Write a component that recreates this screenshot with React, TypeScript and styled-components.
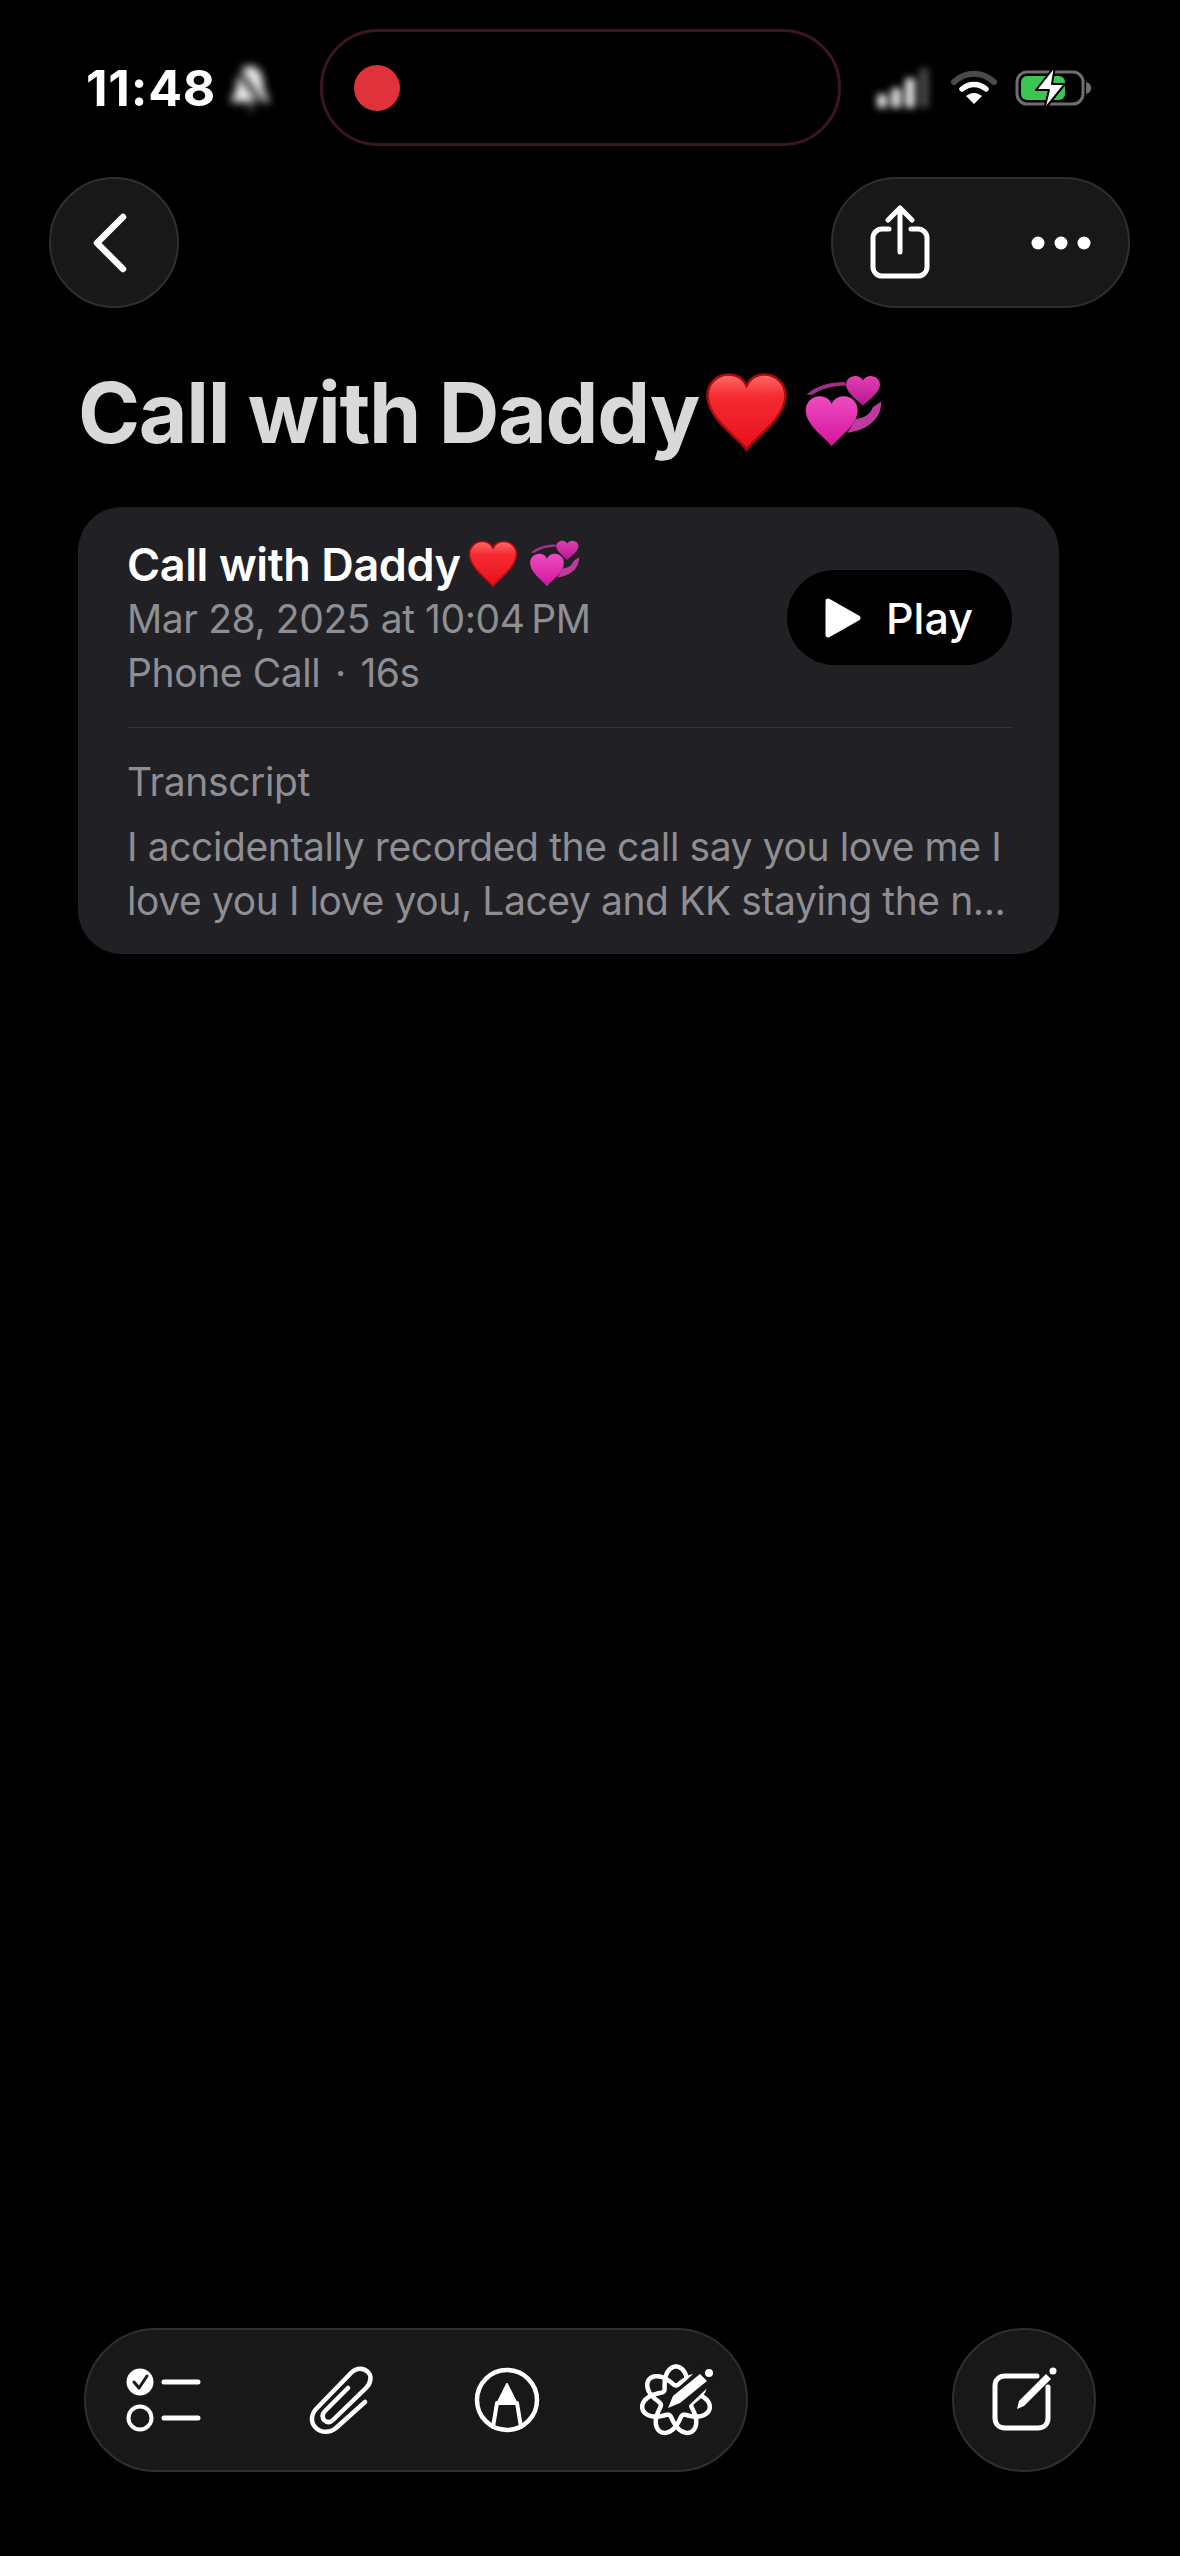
import { createGlobalStyle, styled } from 'styled-components'

const GlobalStyle = createGlobalStyle`
  html, body {
    margin: 0;
    background: #000;
  }
  * {
    box-sizing: border-box;
  }
`

const Page = styled.div`
  width: 1180px;
  height: 2556px;
  background: #000;
  color: #fff;
  font-family: Inter, "Liberation Sans", sans-serif;
  display: flex;
  flex-direction: column;
  overflow: hidden;
`

const StatusBar = styled.div`
  height: 117px;
  margin-top: 29px;
  padding: 0 50px 0 86px;
  display: flex;
  align-items: center;
`

const Clock = styled.div`
  width: 139px;
  font-size: 50px;
  font-weight: 700;
  letter-spacing: 0.8px;
`

const Muted = styled.svg`
  width: 50px;
  height: 52px;
  filter: blur(4.5px);
`

const Island = styled.div`
  margin-left: 45px;
  width: 521px;
  height: 117px;
  border: 3px solid #3d1522;
  border-radius: 58px;
  padding-left: 31px;
  display: flex;
  align-items: center;
`

const RecordDot = styled.div`
  width: 46px;
  height: 46px;
  border-radius: 50%;
  background: #e0323a;
`

const StatusIcons = styled.div`
  margin-left: 34px;
  display: flex;
  align-items: center;
  gap: 18px;
`

const Nav = styled.div`
  margin-top: 31px;
  padding: 0 50px 0 49px;
  display: flex;
  justify-content: space-between;
`

const GlassButton = styled.div<{ $w: number; $h?: number }>`
  width: ${(p) => p.$w}px;
  height: ${(p) => p.$h ?? 131}px;
  border-radius: 72px;
  background: #181818;
  border: 2px solid #2f2f2f;
  display: flex;
  align-items: center;
  justify-content: center;
`

const BackChevron = styled.svg`
  margin-right: 8px;
`

const SplitButton = styled(GlassButton)`
  justify-content: space-between;
  padding: 0 37px 0 36px;
`

const Title = styled.h1`
  margin: 56px 0 0 78px;
  height: 96px;
  display: flex;
  align-items: center;
  font-size: 84px;
  font-weight: 700;
  letter-spacing: -1.3px;
  color: #d9d9d9;
  white-space: nowrap;
`

const Card = styled.div`
  margin: 47px 0 0 78px;
  width: 981px;
  height: 447px;
  border-radius: 44px;
  background: #212125;
  padding: 31px 47px 0 49px;
`

const CardTop = styled.div`
  display: flex;
  justify-content: space-between;
  align-items: flex-start;
  height: 190px;
  border-bottom: 1px solid #333337;
`

const CardTitle = styled.div`
  display: flex;
  align-items: center;
  height: 52px;
  margin-bottom: 2px;
  font-size: 45px;
  font-weight: 600;
  letter-spacing: -0.4px;
  white-space: nowrap;
`

const Meta = styled.div`
  font-size: 39px;
  line-height: 54px;
  letter-spacing: -0.4px;
  color: #8e8e93;
  white-space: nowrap;
`

const MetaDot = styled.span`
  margin: 0 4px;
`

const PlayButton = styled.div`
  width: 225px;
  height: 95px;
  margin-top: 32px;
  border-radius: 48px;
  background: #000;
  display: flex;
  align-items: center;
  padding-left: 38px;
  gap: 25px;
  font-size: 43px;
  font-weight: 500;
`

const Transcript = styled.div`
  padding-top: 27px;
  font-size: 39px;
  line-height: 54px;
  letter-spacing: -0.4px;
  color: #8e8e93;
  white-space: nowrap;
`

const TranscriptBody = styled.div`
  margin-top: 11px;
`

const Toolbar = styled.div`
  margin-top: auto;
  margin-bottom: 84px;
  padding: 0 84px;
  display: flex;
  justify-content: space-between;
`

const ToolGroup = styled(GlassButton)`
  justify-content: flex-start;
  padding-left: 40px;
`

const ToolIcon = styled.svg<{ $ml?: number }>`
  margin-left: ${(p) => p.$ml ?? 0}px;
`

const HEART_PATH =
  'M32 62C26 53 3 38 2 20 1.500 9 9.500 2 18.500 2 24.500 2 29.500 5.500 32 11 34.500 5.500 39.500 2 45.500 2 54.500 2 62.500 9 62 20 61 38 38 53 32 62Z'

// seven interlaced loops behind the writing tools pen, wound twice round
const ORBIT_POINTS = Array.from({ length: 361 }, (_, i) => {
  const t = (i / 360) * Math.PI * 4
  const r = 25 + 9.5 * Math.cos(3.5 * t)
  return `${(36 + r * Math.cos(t)).toFixed(2)},${(37 + r * Math.sin(t)).toFixed(2)}`
}).join(' ')

const Heart = ({ w, h }: { w: number; h: number }) => (
  <svg width={w} height={h} viewBox="0 0 64 64" preserveAspectRatio="none">
    <defs>
      <linearGradient id="heartFill" x1="0" y1="0" x2="0" y2="1">
        <stop offset="0" stopColor="#ff6a68" />
        <stop offset="0.3" stopColor="#f62a30" />
        <stop offset="1" stopColor="#e5101c" />
      </linearGradient>
    </defs>
    <path d={HEART_PATH} fill="url(#heartFill)" stroke="#a80c12" strokeWidth="2" />
  </svg>
)

const TwoHearts = ({ w, h }: { w: number; h: number }) => (
  <svg width={w} height={h} viewBox="0 0 64 64" preserveAspectRatio="none">
    <defs>
      <linearGradient id="pinkFill" x1="0" y1="0" x2="0" y2="1">
        <stop offset="0" stopColor="#ee4cc0" />
        <stop offset="1" stopColor="#d4149c" />
      </linearGradient>
      <linearGradient id="pinkBack" x1="0" y1="0" x2="0" y2="1">
        <stop offset="0" stopColor="#e040b4" />
        <stop offset="1" stopColor="#b81690" />
      </linearGradient>
    </defs>
    <path d="M2 17C10 9 22 6 34 6L35 9C24 9 14 12 7 17Z" fill="#a52d88" />
    <path d="M64 23C65 38 52 48 36 50L43 38C50 37 55 34 57 28Z" fill="#bd3a9e" />
    <path d={HEART_PATH} fill="url(#pinkBack)" transform="translate(34 0) scale(0.47 0.43)" />
    <path d={HEART_PATH} fill="url(#pinkFill)" transform="translate(0 17) scale(0.72 0.72)" />
  </svg>
)

const Emoji = styled.span<{ $gap: number; $lead: number }>`
  margin-left: ${(p) => p.$lead}px;
  display: inline-flex;
  align-items: center;
  gap: ${(p) => p.$gap}px;
`

const Stroke = {
  fill: 'none',
  stroke: '#fff',
  strokeLinecap: 'round' as const,
  strokeLinejoin: 'round' as const,
}

export default function App() {
  return (
    <Page>
      <GlobalStyle />
      <StatusBar>
        <Clock>11:48</Clock>
        <Muted viewBox="0 0 50 52">
          <path d="M25 4c-8 0-13 8-13 17 0 9-5 15-7 19h40c-2-4-7-10-7-19 0-9-5-17-13-17z" fill="#eee" />
          <path d="M25 42a6 6 0 0 1 0 9" fill="#eee" />
          <path d="M10 4l30 42" stroke="#000" strokeWidth="5" />
        </Muted>
        <Island>
          <RecordDot />
        </Island>
        <StatusIcons>
          <svg width="58" height="44" viewBox="0 0 58 44" style={{ filter: 'blur(3.5px)' }}>
            <rect x="2" y="28" width="10" height="14" rx="3" fill="#ddd" />
            <rect x="16" y="22" width="10" height="20" rx="3" fill="#ddd" />
            <rect x="30" y="12" width="10" height="30" rx="3" fill="#ddd" />
            <rect x="44" y="2" width="10" height="40" rx="3" fill="#444" />
          </svg>
          <svg width="46" height="36" viewBox="0 0 46 36">
            <path d="M3 12C15 1 31 1 43 12" {...Stroke} stroke="#4a4a4a" strokeWidth="6" />
            <path d="M11 19C18 13 28 13 35 19" {...Stroke} strokeWidth="5.500" />
            <path d="M23 34L15 26C20 22 26 22 31 26Z" fill="#fff" />
          </svg>
          <svg width="78" height="44" viewBox="0 0 78 44">
            <rect x="2" y="6" width="66" height="32" rx="10" fill="none" stroke="#6e6e6e" strokeWidth="3" />
            <rect x="6" y="10" width="44" height="24" rx="6" fill="#3cc552" />
            <path d="M71 16c4 1 5 3 5 6s-1 5-5 6z" fill="#6e6e6e" />
            <path
              d="M40 0L21 24H34L29 44 50 18H37Z"
              fill="#fff"
              stroke="#000"
              strokeWidth="2"
              strokeLinejoin="round"
            />
          </svg>
        </StatusIcons>
      </StatusBar>

      <Nav>
        <GlassButton $w={130}>
          <BackChevron width="36" height="60" viewBox="0 0 36 60">
            <path d="M31 4L5 30 31 56" {...Stroke} strokeWidth="6.500" />
          </BackChevron>
        </GlassButton>
        <SplitButton $w={299}>
          <svg width="62" height="76" viewBox="0 0 62 76">
            <path
              d="M20 24H13C8 24 4 28 4 33V62C4 67 8 71 13 71H49C54 71 58 67 58 62V33C58 28 54 24 49 24H42"
              {...Stroke}
              strokeWidth="5"
            />
            <path d="M31 47V4M19 15L31 3 43 15" {...Stroke} strokeWidth="5" />
          </svg>
          <svg width="60" height="14" viewBox="0 0 60 14">
            <circle cx="7" cy="7" r="6.500" fill="#fff" />
            <circle cx="30" cy="7" r="6.500" fill="#fff" />
            <circle cx="53" cy="7" r="6.500" fill="#fff" />
          </svg>
        </SplitButton>
      </Nav>

      <Title>
        Call with Daddy
        <Emoji $gap={16} $lead={6}>
          <Heart w={83} h={80} />
          <TwoHearts w={77} h={74} />
        </Emoji>
      </Title>

      <Card>
        <CardTop>
          <div>
            <CardTitle>
              Call with Daddy
              <Emoji $gap={11} $lead={7}>
                <Heart w={50} h={48} />
                <TwoHearts w={50} h={48} />
              </Emoji>
            </CardTitle>
            <Meta>Mar 28, 2025 at 10:04{'\u202f'}PM</Meta>
            <Meta>
              Phone Call<MetaDot> · </MetaDot>16s
            </Meta>
          </div>
          <PlayButton>
            <svg width="36" height="42" viewBox="0 0 36 42">
              <path d="M3 4L33 21 3 38Z" fill="#fff" stroke="#fff" strokeWidth="5" strokeLinejoin="round" />
            </svg>
            Play
          </PlayButton>
        </CardTop>
        <Transcript>
          Transcript
          <TranscriptBody>
            I accidentally recorded the call say you love me I
            <br />
            love you I love you, Lacey and KK staying the n...
          </TranscriptBody>
        </Transcript>
      </Card>

      <Toolbar>
        <ToolGroup $w={664} $h={144}>
          <ToolIcon width="76" height="66" viewBox="0 0 76 66">
            <circle cx="14" cy="15" r="13.500" fill="#fff" />
            <path d="M8 15l5 6 8-12" {...Stroke} stroke="#181818" strokeWidth="3" />
            <circle cx="14" cy="51" r="11.500" {...Stroke} strokeWidth="4" />
            <path d="M38 15H72M38 51H72" {...Stroke} strokeWidth="5" />
          </ToolIcon>
          <ToolIcon $ml={107} width="64" height="70" viewBox="0 0 64 70">
            <path
              d="M56 37L27 63C21 68 12 68 7 63 1 57 2 49 8 43L42 8C48 2 55 3 59 7 63 11 62 18 57 23L24 55C21 58 18 58 15 55 13 52 13 49 16 46L39 23"
              {...Stroke}
              strokeWidth="4.500"
            />
          </ToolIcon>
          <ToolIcon $ml={101} width="66" height="66" viewBox="0 0 66 66">
            <circle cx="33" cy="33" r="30" {...Stroke} strokeWidth="4.500" />
            <path d="M23 36L19 60M43 36L47 60" {...Stroke} strokeWidth="4" />
            <path d="M33 17L23 37H43Z" fill="#fff" stroke="#fff" strokeWidth="2" strokeLinejoin="round" />
          </ToolIcon>
          <ToolIcon $ml={100} width="76" height="72" viewBox="0 0 76 72">
            <polyline
              points={ORBIT_POINTS}
              transform="rotate(-90 36 37)"
              {...Stroke}
              strokeWidth="4.500"
            />
            <path d="M76 2L38 38" stroke="#181818" strokeWidth="20" />
            <path d="M28 44L33 32 60 10 67 17 40 39Z" fill="#fff" />
            <circle cx="69" cy="9" r="4" fill="#fff" />
          </ToolIcon>
        </ToolGroup>
        <GlassButton $w={144} $h={144}>
          <svg width="66" height="66" viewBox="0 0 66 66">
            <path
              d="M46 9H14C8 9 4 13 4 19V51C4 57 8 61 14 61H47C53 61 57 57 57 51V20"
              {...Stroke}
              strokeWidth="5"
            />
            <path d="M26 42L28 34 55 7 60 12 33 39Z" fill="#fff" />
            <circle cx="62" cy="4" r="3.500" fill="#fff" />
          </svg>
        </GlassButton>
      </Toolbar>
    </Page>
  )
}
